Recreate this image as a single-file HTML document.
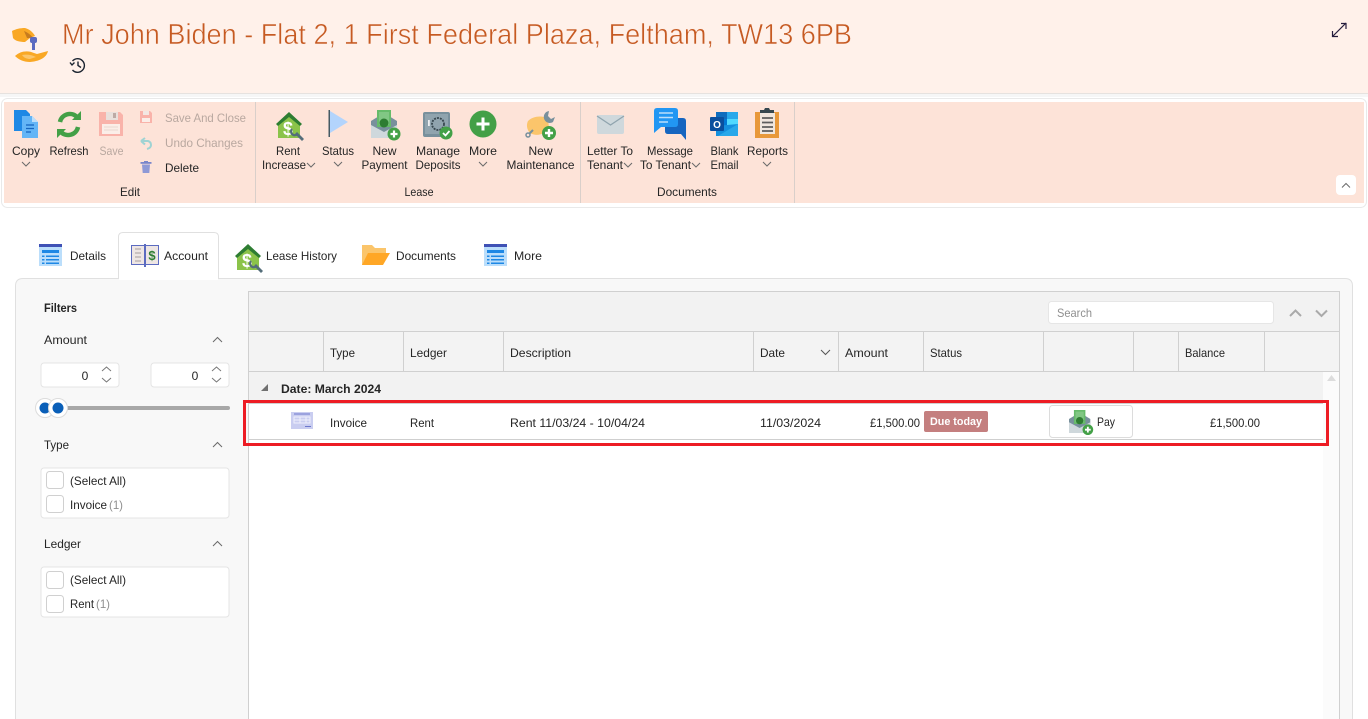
<!DOCTYPE html>
<html lang="en">
<head>
<meta charset="utf-8">
<title>Mr John Biden</title>
<style>
html,body{margin:0;padding:0;background:#fff;width:1368px;height:719px;overflow:hidden}
svg{display:block;position:absolute;left:0;top:0}
text{font-family:"Liberation Sans",sans-serif;font-size:12px;fill:#252525}
.g{fill:#b9a8a0}
.m{text-anchor:middle}
.gr{fill:#8f8f8f}
.chev{fill:none;stroke:#6a6a6a;stroke-width:1}
.cb{fill:#fff;stroke:#d0d0d0}
</style>
</head>
<body>
<svg width="1368" height="719" viewBox="0 0 1368 719" xmlns="http://www.w3.org/2000/svg">
<defs>
<g id="lst"><rect width="23" height="22" y="0" fill="#bbdefb"/><rect width="23" height="3" fill="#3f51b5"/><rect x="3" y="6" width="17" height="3" fill="#1e88e5"/><rect x="7" y="11.500" width="13" height="1.500" fill="#1e88e5"/><rect x="7" y="15" width="13" height="1.500" fill="#1e88e5"/><rect x="7" y="18.500" width="13" height="1.500" fill="#1e88e5"/><rect x="3" y="11.500" width="2.500" height="1.500" fill="#1e88e5"/><rect x="3" y="15" width="2.500" height="1.500" fill="#1e88e5"/><rect x="3" y="18.500" width="2.500" height="1.500" fill="#1e88e5"/></g>
<g id="house"><path d="M1 12 L13 2 L25 12 L24 12 L24 26 L2 26 L2 12Z" fill="#8bc34a"/><path d="M0 12 L13 0 L26 12 L24 14 L13 5 L2 14Z" fill="#2e7d32"/><text x="12" y="23" class="m" style="font-size:18px;font-weight:bold;fill:#fff">$</text><path d="M20 21 L27 28" stroke="#546e7a" stroke-width="2.800"/><path d="M16 17 A3.500 3.500 0 0 0 21.500 22" fill="none" stroke="#546e7a" stroke-width="2.200"/></g>
<g id="pay"><path d="M0 11 L13 3 L26 11 L26 28 L0 28Z" fill="#78909c"/><rect x="6" y="0" width="14" height="17" fill="#66bb6a"/><rect x="8" y="2" width="10" height="13" fill="#81c784"/><circle cx="13" cy="13" r="4.500" fill="#2e7d32"/><path d="M0 15 L13 22 L26 15 L26 28 L0 28Z" fill="#cfd8dc"/><circle cx="23" cy="24" r="6.500" fill="#43a047"/><path d="M23 20.500V27.500M19.500 24H26.500" stroke="#fff" stroke-width="2.200"/></g>
</defs>

<!-- header -->
<rect width="1368" height="93" fill="#fff1ea"/>
<rect y="93" width="1368" height="1" fill="#e6e2df"/>
<rect y="94" width="1368" height="3" fill="#f6f6f6"/>
<!-- key hand logo -->
<path d="M12 31 C16 29 20 28 25 28 C29 29 33 32 35 36 L30 38 L25 42 C20 42 15 41 13 38Z" fill="#f9a825"/>
<path d="M24 31 C27 32 31 35 33 38 L27 38Z" fill="#c77c1e"/>
<rect x="30" y="37" width="7" height="6" rx="2" fill="#5c6bc0"/><rect x="32" y="41" width="3" height="9" fill="#5c6bc0"/>
<path d="M15 56 C20 51 28 50 34 53 L37 54 L48 51 C47 56 42 61 30 62 C24 62 19 60 15 56Z" fill="#f9a825"/>
<path d="M22 55 C27 54 32 55 36 57 L30 59 C27 59 24 58 22 55Z" fill="#fbc56b"/>
<text x="62" y="44" textLength="790" lengthAdjust="spacingAndGlyphs" style="font-size:29px;fill:#c65a22;stroke:#fff1ea;stroke-width:.55">Mr John Biden - Flat 2, 1 First Federal Plaza, Feltham, TW13 6PB</text>
<!-- history -->
<g fill="none" stroke="#1b2430" stroke-width="1.400"><path d="M72.500 61 A6.800 6.800 0 1 1 72.500 70"/><path d="M70 62.500 L72 65 L74.500 62.500"/><path d="M78 61.500 V65.500 L81 67.500"/></g>
<!-- expand -->
<g fill="none" stroke="#241c3c" stroke-width="1.200"><path d="M1333 36 L1346 23"/><path d="M1341 23.500 H1346 V29"/><path d="M1332.500 31 V36.500 H1338"/></g>

<!-- ribbon -->
<rect x="1.500" y="98.500" width="1365" height="109" rx="6" fill="#fff" stroke="#e9e9e9"/>
<rect x="4" y="102" width="1360" height="101" fill="#fde3d8"/>
<rect x="255" y="102" width="1" height="101" fill="#d9cfca"/>
<rect x="580" y="102" width="1" height="101" fill="#d9cfca"/>
<rect x="794" y="102" width="1" height="101" fill="#d9cfca"/>
<rect x="1336" y="175" width="20" height="20" rx="4" fill="#fff"/>
<path d="M1342 187.500 L1346 183.500 L1350 187.500" class="chev"/>

<!-- Copy icon -->
<path d="M14 110 H26 L30 114 V131 H14Z" fill="#1e88e5"/>
<path d="M22 116 H32 L38 122 V138 H22Z" fill="#64b5f6"/><path d="M32 116 L38 122 H32Z" fill="#bbdefb"/>
<path d="M26 125 H34 M26 128.500 H34 M26 132 H31" stroke="#1565c0" stroke-width="1.300"/>
<text x="26" y="155" class="m" textLength="28" lengthAdjust="spacingAndGlyphs">Copy</text>
<path d="M22 162 L26 166 L30 162" class="chev"/>

<!-- Refresh -->
<g fill="none" stroke="#43a047" stroke-width="4.500"><path d="M60 122 A10 10 0 0 1 77 117"/><path d="M78 127 A10 10 0 0 1 61 132"/></g>
<path d="M72 120 H81 V111Z" fill="#43a047"/><path d="M66 129 H57 V138Z" fill="#43a047"/>
<text x="69" y="155" class="m" textLength="39" lengthAdjust="spacingAndGlyphs">Refresh</text>

<!-- Save -->
<path d="M99 112 H120 L123 115 V136 H99Z" fill="#f9b3aa"/>
<rect x="106" y="112" width="12" height="8" fill="#e9e0dc"/><rect x="113" y="113" width="3" height="5" fill="#bdaaa5"/>
<rect x="102" y="124" width="18" height="10" fill="#fbeee8"/>
<path d="M104 127 H118 M104 130 H118" stroke="#e8d8d0"/>
<text x="111.500" y="155" class="m g" textLength="24" lengthAdjust="spacingAndGlyphs" style="font-size:12px">Save</text>

<!-- small -->
<path d="M140 111 H150 L152 113 V123 H140Z" fill="#f9b3aa"/><rect x="143" y="111" width="6" height="4" fill="#f3e7e2"/><rect x="142" y="118" width="8" height="4" fill="#fbeee8"/>
<text x="165" y="122" class="g" textLength="81" lengthAdjust="spacingAndGlyphs">Save And Close</text>
<path d="M141 141 L145 138 M141 141 L145 144.500 M142 141 H148 Q151 142 151 145 Q151 148 147 149" fill="none" stroke="#9fd3d3" stroke-width="2"/>
<text x="165" y="147" class="g" textLength="78" lengthAdjust="spacingAndGlyphs">Undo Changes</text>
<rect x="140.500" y="162" width="11" height="1.800" fill="#7986cb"/><rect x="144" y="161" width="4" height="2" fill="#7986cb"/><path d="M142 164.500 H150 L149.300 173 H142.700Z" fill="#8e99d6"/>
<text x="165" y="172" textLength="34" lengthAdjust="spacingAndGlyphs">Delete</text>
<text x="130" y="196" class="m" textLength="20" lengthAdjust="spacingAndGlyphs">Edit</text>

<!-- Rent Increase -->
<use href="#house" x="276" y="112"/>
<text x="288" y="155" class="m" textLength="24" lengthAdjust="spacingAndGlyphs">Rent</text>
<text x="262" y="169" textLength="44" lengthAdjust="spacingAndGlyphs">Increase</text>
<path d="M307 163 L311 167 L315 163" class="chev"/>

<!-- Status -->
<rect x="328.500" y="110" width="1.500" height="27" fill="#455a64"/>
<path d="M330 111 L348 122 L330 133Z" fill="#b3d4fc"/>
<text x="338" y="155" class="m" textLength="32" lengthAdjust="spacingAndGlyphs">Status</text>
<path d="M334 162 L338 166 L342 162" class="chev"/>

<!-- New Payment -->
<use href="#pay" x="371" y="110"/>
<text x="384.500" y="155" class="m" textLength="24" lengthAdjust="spacingAndGlyphs">New</text>
<text x="384.500" y="169" class="m" textLength="46" lengthAdjust="spacingAndGlyphs">Payment</text>

<!-- Manage Deposits -->
<rect x="423" y="112" width="27" height="25" rx="2" fill="#78909c"/>
<rect x="425" y="114" width="23" height="20" fill="#90a4ae"/>
<circle cx="438" cy="124" r="6" fill="none" stroke="#37474f" stroke-width="1.800" stroke-dasharray="2 1"/>
<rect x="428" y="120" width="1.800" height="6" fill="#eceff1"/>
<circle cx="446" cy="133" r="6.500" fill="#43a047"/><path d="M443 133 L445.500 135.500 L449.500 131" fill="none" stroke="#fff" stroke-width="1.800"/>
<text x="438" y="155" class="m" textLength="44" lengthAdjust="spacingAndGlyphs">Manage</text>
<text x="438" y="169" class="m" textLength="45" lengthAdjust="spacingAndGlyphs">Deposits</text>

<!-- More -->
<circle cx="483" cy="124" r="13.500" fill="#43a047"/><path d="M483 117.500 V130.500 M476.500 124 H489.500" stroke="#fff" stroke-width="3"/>
<text x="483" y="155" class="m" textLength="28" lengthAdjust="spacingAndGlyphs">More</text>
<path d="M479 162 L483 166 L487 162" class="chev"/>

<!-- New Maintenance -->
<path d="M528 121 C533 116 543 115 548 119 L549 128 C545 134 537 137 530 133 C527 130 526 125 528 121Z" fill="#fbc56b"/>
<path d="M549 111 A6 6 0 1 0 553 122 L555 117 L551 119 L548 116 Z" fill="#78909c"/>
<path d="M529 134 L533 130" stroke="#78909c" stroke-width="2"/><circle cx="528" cy="135" r="2" fill="none" stroke="#78909c" stroke-width="1.500"/>
<circle cx="549" cy="133" r="7" fill="#43a047"/><path d="M549 129 V137 M545 133 H553" stroke="#fff" stroke-width="2.400"/>
<text x="540.500" y="155" class="m" textLength="24" lengthAdjust="spacingAndGlyphs">New</text>
<text x="540.500" y="169" class="m" textLength="68" lengthAdjust="spacingAndGlyphs">Maintenance</text>
<text x="419" y="196" class="m" textLength="29" lengthAdjust="spacingAndGlyphs">Lease</text>

<!-- Letter -->
<rect x="597" y="115" width="27" height="19" rx="2" fill="#cfd8dc"/>
<path d="M597 116 L610.500 125 L624 116" fill="none" stroke="#90a4ae" stroke-width="1.300"/>
<text x="610" y="155" class="m" textLength="46" lengthAdjust="spacingAndGlyphs">Letter To</text>
<text x="587" y="169" textLength="36" lengthAdjust="spacingAndGlyphs">Tenant</text>
<path d="M624 163 L628 167 L632 163" class="chev"/>

<!-- Message -->
<path d="M665 118 H683 Q686 118 686 121 V140 L681 134 H668 Q665 134 665 131Z" fill="#1565c0"/>
<path d="M657 108 H675 Q678 108 678 111 V124 Q678 127 675 127 H661 L654 133 V111 Q654 108 657 108Z" fill="#2196f3"/>
<path d="M659 113 H673 M659 117.500 H673 M659 122 H668" stroke="#bbdefb" stroke-width="1.500"/>
<text x="670" y="155" class="m" textLength="46" lengthAdjust="spacingAndGlyphs">Message</text>
<text x="640" y="169" textLength="51" lengthAdjust="spacingAndGlyphs">To Tenant</text>
<path d="M692 163 L696 167 L700 163" class="chev"/>

<!-- Outlook -->
<rect x="716" y="112" width="22" height="14" fill="#0f6cbd"/>
<rect x="727" y="112" width="11" height="7" fill="#28a8ea"/><rect x="716" y="119" width="11" height="7" fill="#0078d4"/><rect x="727" y="119" width="11" height="7" fill="#50d9ff"/>
<path d="M716 126 L738 124 V136 H716Z" fill="#1490df"/><path d="M718 136 L738 124 V136Z" fill="#28a8ea"/>
<rect x="710" y="117" width="14" height="14" rx="1" fill="#0a4f9e"/>
<text x="717" y="128" class="m" style="font-size:10px;font-weight:bold;fill:#fff">O</text>
<text x="724.500" y="155" class="m" textLength="28" lengthAdjust="spacingAndGlyphs">Blank</text>
<text x="724.500" y="169" class="m" textLength="28" lengthAdjust="spacingAndGlyphs">Email</text>

<!-- Reports -->
<rect x="755" y="112" width="24" height="26" fill="#e8983a"/>
<rect x="760" y="113" width="15" height="21" fill="#f0e6de"/>
<path d="M760 113 V110 L764 110 L765 108 H769 L770 110 L774 110 V113 Z" fill="#37474f"/>
<path d="M762 118 H773 M762 122.500 H773 M762 127 H773 M762 131 H773" stroke="#5d5d5d" stroke-width="1.800"/>
<text x="767.500" y="155" class="m" textLength="41" lengthAdjust="spacingAndGlyphs">Reports</text>
<path d="M763 162 L767 166 L771 162" class="chev"/>
<text x="687" y="196" class="m" textLength="60" lengthAdjust="spacingAndGlyphs">Documents</text>

<!-- panel and tabs -->
<path d="M15.500 719 V286 Q15.500 278.500 23 278.500 H1345 Q1352.500 278.500 1352.500 286 V719" fill="#f8f8f8" stroke="#e0e0e0"/>
<path d="M118.500 279 V237 Q118.500 232.500 123 232.500 H214 Q218.500 232.500 218.500 237 V279" fill="#fff" stroke="#e0e0e0"/>
<rect x="119" y="278" width="99" height="2" fill="#fff"/>

<use href="#lst" x="39" y="244"/>
<text x="70" y="260" textLength="36" lengthAdjust="spacingAndGlyphs">Details</text>
<!-- book -->
<path d="M131.500 245.500 H145 V264.500 H131.500Z" fill="#eee6e4" stroke="#5c6bc0"/>
<path d="M145 245.500 H158.500 V264.500 H145Z" fill="#eee6e4" stroke="#5c6bc0"/>
<rect x="144" y="244" width="2" height="23" fill="#5c6bc0"/>
<path d="M135 249 H141 M135 253 H141 M135 257 H141 M135 261 H141" stroke="#bdb5b5" stroke-width="1.500"/>
<text x="152" y="260" class="m" style="font-size:13px;font-weight:bold;fill:#2e7d32">$</text>
<text x="164" y="260" textLength="44" lengthAdjust="spacingAndGlyphs">Account</text>
<use href="#house" x="235" y="244"/>
<text x="266" y="260" textLength="71" lengthAdjust="spacingAndGlyphs">Lease History</text>
<path d="M362 245 H372 L375 248 H386 V254 H372 L368 265 H362Z" fill="#fbc56b"/>
<path d="M368 253 H390 L383 265 H362Z" fill="#ffa726"/>
<text x="396" y="260" textLength="60" lengthAdjust="spacingAndGlyphs">Documents</text>
<use href="#lst" x="484" y="244"/>
<text x="514" y="260" textLength="28" lengthAdjust="spacingAndGlyphs">More</text>

<!-- filters -->
<text x="44" y="312" textLength="33" lengthAdjust="spacingAndGlyphs" style="font-weight:bold;font-size:12px">Filters</text>
<text x="44" y="344" textLength="43" lengthAdjust="spacingAndGlyphs">Amount</text>
<path d="M213 342 L217.500 337.500 L222 342" class="chev"/>
<rect x="41" y="363" width="78" height="24" rx="3" fill="#fff" stroke="#e4e4e4"/><rect x="151" y="363" width="78" height="24" rx="3" fill="#fff" stroke="#e4e4e4"/>
<text x="85" y="380" class="m">0</text><text x="195" y="380" class="m">0</text>
<path d="M102 371 L106.500 367 L111 371 M102 378 L106.500 382 L111 378 M212 371 L216.500 367 L221 371 M212 378 L216.500 382 L221 378" fill="none" stroke="#777"/>
<rect x="60" y="406" width="170" height="4" rx="2" fill="#a8a8a8"/>
<circle cx="45" cy="408" r="9.500" fill="#fff" stroke="#dcdcdc"/><circle cx="45" cy="408" r="5.500" fill="#0a5fb8"/>
<circle cx="58" cy="408" r="9.500" fill="#fff" stroke="#dcdcdc"/><circle cx="58" cy="408" r="5.500" fill="#0a5fb8"/>

<text x="44" y="449" textLength="25" lengthAdjust="spacingAndGlyphs">Type</text>
<path d="M213 447 L217.500 442.500 L222 447" class="chev"/>
<rect x="41" y="468" width="188" height="50" rx="3" fill="#fff" stroke="#e4e4e4"/>
<rect x="46.500" y="471.500" width="17" height="17" rx="3" class="cb"/><rect x="46.500" y="495.500" width="17" height="17" rx="3" class="cb"/>
<text x="70" y="485" textLength="56" lengthAdjust="spacingAndGlyphs">(Select All)</text>
<text x="70" y="509" textLength="37" lengthAdjust="spacingAndGlyphs">Invoice</text>
<text x="109" y="509" class="gr" textLength="14" lengthAdjust="spacingAndGlyphs">(1)</text>

<text x="44" y="548" textLength="37" lengthAdjust="spacingAndGlyphs">Ledger</text>
<path d="M213 546 L217.500 541.500 L222 546" class="chev"/>
<rect x="41" y="567" width="188" height="50" rx="3" fill="#fff" stroke="#e4e4e4"/>
<rect x="46.500" y="571.500" width="17" height="17" rx="3" class="cb"/><rect x="46.500" y="595.500" width="17" height="17" rx="3" class="cb"/>
<text x="70" y="584" textLength="56" lengthAdjust="spacingAndGlyphs">(Select All)</text>
<text x="70" y="608" textLength="24" lengthAdjust="spacingAndGlyphs">Rent</text>
<text x="96" y="608" class="gr" textLength="14" lengthAdjust="spacingAndGlyphs">(1)</text>

<!-- grid -->
<rect x="248.500" y="291.500" width="1091" height="440" fill="#fff" stroke="#d0d0d0"/>
<rect x="249" y="292" width="1090" height="39" fill="#f2f2f2"/>
<rect x="249" y="331" width="1090" height="1" fill="#d0d0d0"/>
<rect x="249" y="332" width="1090" height="39" fill="#f3f3f3"/>
<rect x="249" y="371" width="1090" height="1" fill="#d0d0d0"/>
<rect x="249" y="372" width="1074" height="31" fill="#f2f2f2"/>
<rect x="1323" y="372" width="16" height="347" fill="#fbfbfb"/>
<path d="M1327 381 L1331.500 375 L1336 381Z" fill="#dcdcdc"/>
<g fill="#d0d0d0"><rect x="323" y="332" width="1" height="39"/><rect x="403" y="332" width="1" height="39"/><rect x="503" y="332" width="1" height="39"/><rect x="753" y="332" width="1" height="39"/><rect x="838" y="332" width="1" height="39"/><rect x="923" y="332" width="1" height="39"/><rect x="1043" y="332" width="1" height="39"/><rect x="1133" y="332" width="1" height="39"/><rect x="1178" y="332" width="1" height="39"/><rect x="1264" y="332" width="1" height="39"/></g>

<rect x="1048.500" y="301.500" width="225" height="22" rx="3" fill="#fff" stroke="#e6e6e6"/>
<text x="1057" y="317" class="gr" textLength="35" lengthAdjust="spacingAndGlyphs">Search</text>
<path d="M1290 316 L1295.500 310.500 L1301 316 M1316 310.500 L1321.500 316 L1327 310.500" fill="none" stroke="#aaa" stroke-width="2"/>

<text x="330" y="357" textLength="25" lengthAdjust="spacingAndGlyphs">Type</text>
<text x="410" y="357" textLength="37" lengthAdjust="spacingAndGlyphs">Ledger</text>
<text x="510" y="357" textLength="61" lengthAdjust="spacingAndGlyphs">Description</text>
<text x="760" y="357" textLength="25" lengthAdjust="spacingAndGlyphs">Date</text>
<path d="M821 350 L825.500 354.500 L830 350" fill="none" stroke="#555"/>
<text x="845" y="357" textLength="43" lengthAdjust="spacingAndGlyphs">Amount</text>
<text x="930" y="357" textLength="32" lengthAdjust="spacingAndGlyphs">Status</text>
<text x="1185" y="357" textLength="40" lengthAdjust="spacingAndGlyphs">Balance</text>

<path d="M261 391 L268 391 L268 384Z" fill="#707070"/>
<text x="281" y="393" textLength="100" lengthAdjust="spacingAndGlyphs" style="font-weight:bold">Date: March 2024</text>

<!-- row -->
<rect x="249" y="403" width="1074" height="1" fill="#cfcfcf"/>
<rect x="249" y="439" width="1074" height="1" fill="#cfcfcf"/>
<rect x="291" y="412" width="22" height="17" fill="#c9cdf0"/>
<path d="M294 414 H310" stroke="#6d78cc" fill="none"/>
<path d="M294 417 H310 V423 H294Z M294 420 H310 M300 417 V423 M306 417 V423" fill="none" stroke="#eef0fb"/>
<path d="M305 426.500 H311" stroke="#6d78cc" fill="none"/>
<text x="330" y="427" textLength="37" lengthAdjust="spacingAndGlyphs">Invoice</text>
<text x="410" y="427" textLength="24" lengthAdjust="spacingAndGlyphs">Rent</text>
<text x="510" y="427" textLength="135" lengthAdjust="spacingAndGlyphs">Rent 11/03/24 - 10/04/24</text>
<text x="760" y="427" textLength="61" lengthAdjust="spacingAndGlyphs">11/03/2024</text>
<text x="870" y="427" textLength="50" lengthAdjust="spacingAndGlyphs">£1,500.00</text>
<rect x="924" y="411" width="64" height="21" rx="2" fill="#c47f7f"/>
<text x="956" y="425" class="m" textLength="52" lengthAdjust="spacingAndGlyphs" style="fill:#fff;font-weight:bold;font-size:11px">Due today</text>
<rect x="1049.500" y="405.500" width="83" height="32" rx="3" fill="#fff" stroke="#dcdcdc"/>
<use href="#pay" transform="translate(1069 410) scale(.82)"/>
<text x="1097" y="426" textLength="18" lengthAdjust="spacingAndGlyphs">Pay</text>
<text x="1210" y="427" textLength="50" lengthAdjust="spacingAndGlyphs">£1,500.00</text>

<rect x="244.500" y="401.500" width="1083" height="43" fill="none" stroke="#ed1c24" stroke-width="3"/>
</svg>
</body>
</html>
